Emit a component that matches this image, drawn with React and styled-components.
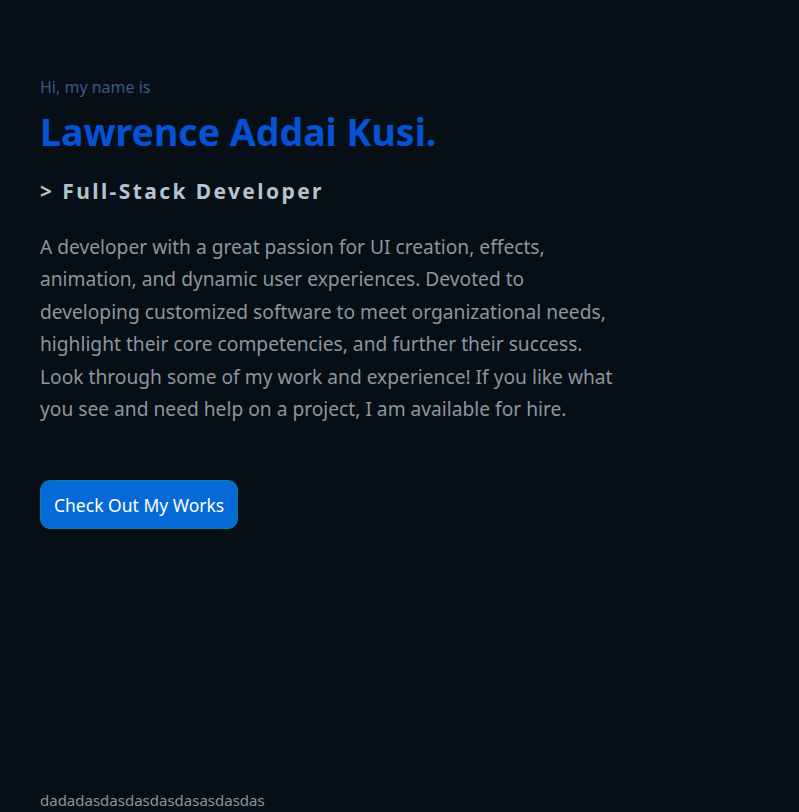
import React from 'react'
import styled, { createGlobalStyle } from 'styled-components'

const GlobalStyle = createGlobalStyle`
    html, body {
        margin: 0;
        padding: 0;
        background: #060f16;
    }
    body {
        font-family: 'Noto Sans', 'Open Sans', sans-serif;
    }
`

const Page = styled.div`
    min-height: 812px;
    display: flex;
    flex-direction: column;
    background: #060f16;
`

const Hero = styled.section`
    flex: 1;
    padding: 75px 40px 0;
`

const Greeting = styled.p`
    margin: 0;
    font-size: 16px;
    line-height: 24px;
    color: #3d5887;
`

const Name = styled.h1`
    margin: 9px 0 0;
    font-size: 37.5px;
    line-height: 48px;
    font-weight: 700;
    color: #0552d6;
`

const Role = styled.h2`
    margin: 20px 0 0;
    font-size: 21px;
    line-height: 30px;
    font-weight: 700;
    letter-spacing: 2.4px;
    color: #b4c3ce;
`

const Intro = styled.p`
    margin: 25px 0 0;
    max-width: 640px;
    font-size: 19.2px;
    line-height: 32.4px;
    color: #8b969f;
`

const Button = styled.button`
    margin-top: 55px;
    height: 49px;
    padding: 0 13px;
    border: 1px solid #0a7fa3;
    border-radius: 10px;
    background: #056ad8;
    color: #ffffff;
    font-family: inherit;
    font-size: 17.5px;
    cursor: pointer;
`

const Footer = styled.footer`
    padding: 0 40px 2px;
    font-size: 15px;
    line-height: 20px;
    color: #8896a1;
`

const introLines = [
    'A developer with a great passion for UI creation, effects,',
    'animation, and dynamic user experiences. Devoted to',
    'developing customized software to meet organizational needs,',
    'highlight their core competencies, and further their success.',
    'Look through some of my work and experience! If you like what',
    'you see and need help on a project, I am available for hire.',
]

const App = () => {
    return (
        <Page>
            <GlobalStyle />
            <Hero>
                <Greeting>Hi, my name is</Greeting>
                <Name>Lawrence Addai Kusi.</Name>
                <Role>&gt; Full-Stack Developer</Role>
                <Intro>
                    {introLines.map((line, i) => (
                        <React.Fragment key={i}>
                            {line}
                            {i < introLines.length - 1 && <br />}
                        </React.Fragment>
                    ))}
                </Intro>
                <Button>Check Out My Works</Button>
            </Hero>
            <Footer>dadadasdasdasdasdasasdasdas</Footer>
        </Page>
    )
}

export default App
